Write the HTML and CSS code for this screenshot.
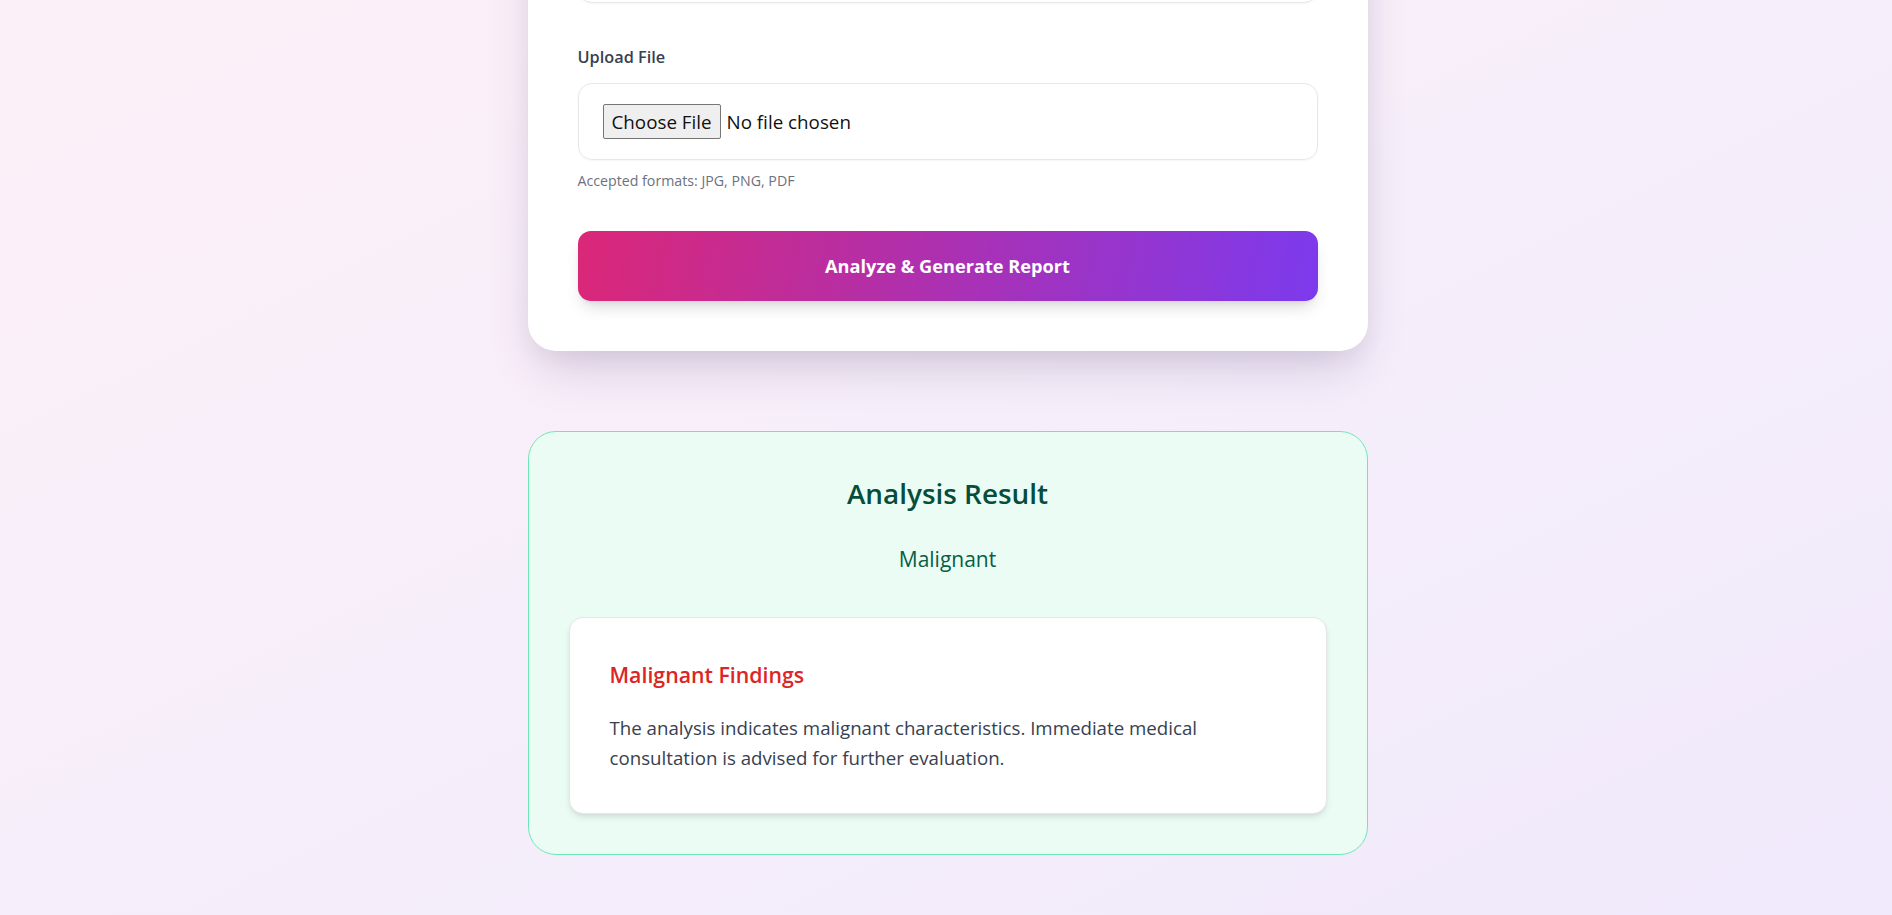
FILE: index.html
```html
<!DOCTYPE html>
<html lang="en">
<head>
<meta charset="utf-8">
<title>Analysis</title>
<link rel="stylesheet" href="styles.css">
</head>
<body>
<main class="page">
  <section class="card">
    <div class="field">
      <input class="text-input" type="text" aria-label="Patient name">
    </div>
    <div class="field">
      <label class="label" for="file">Upload File</label>
      <div class="file-box">
        <input class="file-input" id="file" type="file" accept=".jpg,.png,.pdf">
      </div>
      <p class="hint">Accepted formats: JPG, PNG, PDF</p>
    </div>
    <button class="submit" type="button">Analyze &amp; Generate Report</button>
  </section>

  <section class="result">
    <h2 class="result-title">Analysis Result</h2>
    <p class="result-value">Malignant</p>
    <div class="finding">
      <h3 class="finding-title">Malignant Findings</h3>
      <p class="finding-text">The analysis indicates malignant characteristics. Immediate medical consultation is advised for further evaluation.</p>
    </div>
  </section>
</main>
</body>
</html>
```
FILE: styles.css
```css
* { box-sizing: border-box; }

html, body {
  margin: 0;
  min-height: 100%;
}

body {
  font-family: "Open Sans", "Noto Sans", sans-serif;
  background: linear-gradient(to bottom right, #fcf0f8 0%, #f6eefa 50%, #f0e9fb 100%);
  min-height: 100vh;
  overflow: hidden;
}

.page {
  display: flex;
  flex-direction: column;
  align-items: center;
  padding: 0 0 80px 3px;
}

.card {
  width: 840px;
  margin-top: -124px;
  background: #ffffff;
  border-radius: 28px;
  padding: 50px 50px 50px;
  box-shadow: 0 24px 50px -12px rgba(70, 50, 100, 0.22), 0 8px 20px rgba(70, 50, 100, 0.05);
  display: flex;
  flex-direction: column;
  gap: 42px;
}

.field {
  display: flex;
  flex-direction: column;
}

.label {
  font-size: 16.3px;
  font-weight: 600;
  line-height: 24px;
  color: #374151;
  margin-bottom: 14px;
}

.text-input {
  height: 77px;
  border: 1px solid #e5e7eb;
  border-radius: 14px;
  background: #fff;
  box-shadow: 0 1px 2px rgba(0, 0, 0, 0.04);
}

.file-box {
  height: 77px;
  border: 1px solid #e5e7eb;
  border-radius: 14px;
  padding: 20px 24px;
  display: flex;
  align-items: center;
  box-shadow: 0 1px 2px rgba(0, 0, 0, 0.04);
}

.file-input {
  font-family: "Open Sans", "Noto Sans", sans-serif;
  font-size: 18.8px;
  color: #111111;
  height: 35px;
  line-height: 35px;
}

.file-input::file-selector-button {
  font: inherit;
  font-size: 18.8px;
  color: #111111;
  height: 35px;
  padding: 0 8px;
  margin-right: 6px;
  background: #efefef;
  border: 1px solid #767676;
  border-radius: 2px;
}

.hint {
  margin: 11px 0 0;
  font-size: 14.2px;
  line-height: 20px;
  color: #6b7280;
}

.submit {
  margin-top: -2px;
  height: 70px;
  border: 0;
  border-radius: 13px;
  background: linear-gradient(100deg, #db2777 0%, #7c3aed 100%);
  color: #ffffff;
  font-family: "Open Sans", "Noto Sans", sans-serif;
  font-size: 18.2px;
  font-weight: 700;
  box-shadow: 0 10px 16px -4px rgba(0, 0, 0, 0.14), 0 4px 6px -4px rgba(0, 0, 0, 0.1);
  cursor: pointer;
}

.result {
  width: 840px;
  margin-top: 80px;
  background: #ebfcf4;
  border: 1px solid #6ee7b7;
  border-radius: 28px;
  padding: 40px;
  display: flex;
  flex-direction: column;
  align-items: stretch;
}

.result-title {
  margin: 0;
  text-align: center;
  font-size: 27.9px;
  font-weight: 600;
  line-height: 42px;
  color: #064e3b;
}

.result-value {
  margin: 30px 0 0;
  text-align: center;
  font-size: 21px;
  line-height: 30px;
  color: #065f46;
}

.finding {
  margin-top: 43px;
  background: #ffffff;
  border: 1px solid #e5e7eb;
  border-radius: 14px;
  padding: 40px;
  box-shadow: 0 4px 8px -2px rgba(0, 0, 0, 0.12), 0 2px 4px -2px rgba(0, 0, 0, 0.08);
}

.finding-title {
  margin: 0;
  font-size: 21.3px;
  font-weight: 600;
  line-height: 34px;
  color: #dc2626;
}

.finding-text {
  margin: 21px 0 0;
  font-size: 18.7px;
  line-height: 30px;
  color: #374151;
  max-width: 640px;
}
```
